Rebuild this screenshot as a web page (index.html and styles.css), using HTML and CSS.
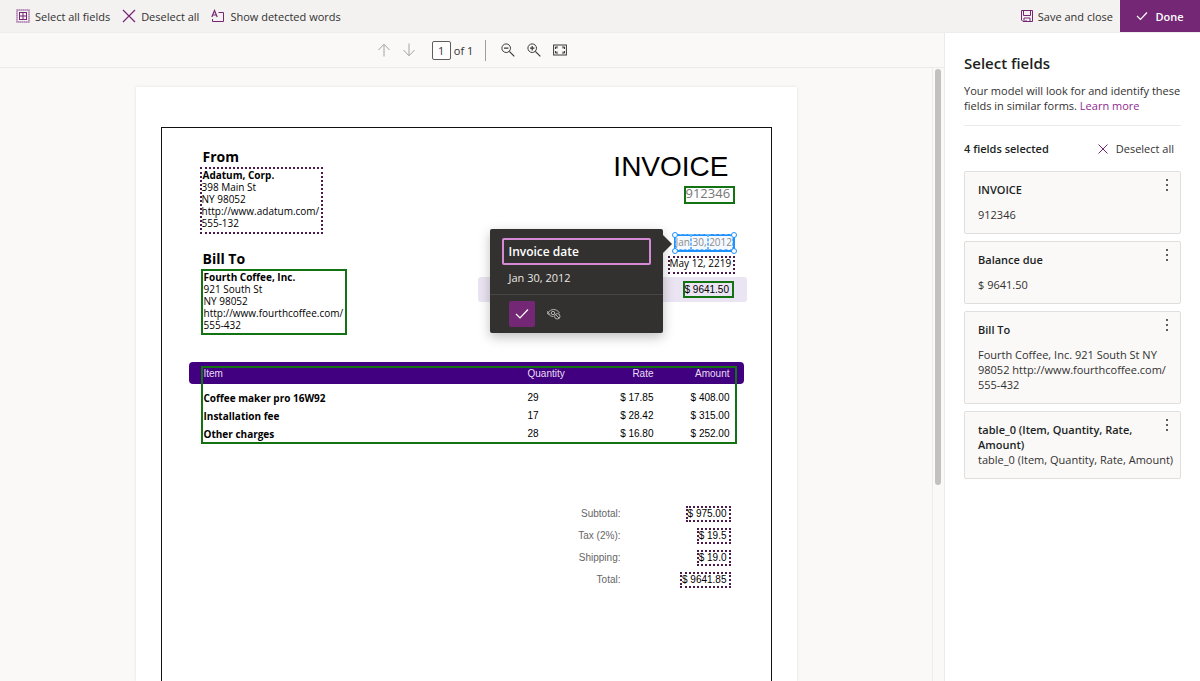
FILE: index.html
```html
<!DOCTYPE html>
<html lang="en">
<head>
  <meta charset="UTF-8">
  <title>Select fields</title>
  <meta name="viewport" content="width=device-width, initial-scale=1.0">
  <link rel="stylesheet" href="styles.css">
</head>

<body>

<header class="topbar">
  <button class="command">
    <svg width="14" height="14" viewBox="0 0 14 14" fill="none"><rect x="1" y="1" width="12" height="12" stroke="#cdb3cd" stroke-width="2"/><rect x="1" y="1" width="12" height="12" stroke="#a87ba8" stroke-dasharray="1 1"/><rect x="3.5" y="3.5" width="7" height="7" stroke="#742774"/><path d="M7 3.500v7M3.500 7h7" stroke="#742774"/></svg>
    Select all fields
  </button>
  <button class="command">
    <svg width="14" height="14" viewBox="0 0 14 14"><path d="M1 1l12 12M13 1L1 13" stroke="#742774" stroke-width="1.200"/></svg>
    Deselect all
  </button>
  <button class="command">
    <svg width="14" height="14" viewBox="0 0 14 14" fill="none" stroke="#742774"><path d="M.8 8L3.500 1.500l2.700 6.500M1.800 6h3.400" stroke-width="1.200"/><path d="M7.500 3.500h5v9h-11V10"/></svg>
    Show detected words
  </button>
  <button class="command save">
    <svg width="12" height="12" viewBox="0 0 12 12" fill="none" stroke="#742774"><path d="M.5.5h11v11H2L.5 10z"/><path d="M2.500.5v5h7v-5M3 11.500v-3.500h6v3.500M5 11.500V10"/></svg>
    Save and close
  </button>
  <button class="done">
    <svg width="12" height="10" viewBox="0 0 12 10"><path d="M1 5l3.500 3.500L11 1.500" fill="none" stroke="#fff" stroke-width="1.200"/></svg>
    Done
  </button>
</header>

<main class="workspace">

  <section class="viewer">
    <div class="pager">
      <button class="icon-button" aria-label="Previous page">
        <svg width="14" height="14" viewBox="0 0 14 14"><path d="M7 13.500V1.500M1.500 7L7 1.200 12.500 7" fill="none" stroke="#a6a4a2"/></svg>
      </button>
      <button class="icon-button next" aria-label="Next page">
        <svg width="14" height="14" viewBox="0 0 14 14"><path d="M7 .5v12M1.500 7L7 12.800 12.500 7" fill="none" stroke="#a6a4a2"/></svg>
      </button>
      <label class="page-label"><input class="page-input" type="text" value="1"> of 1</label>
      <span class="divider"></span>
      <button class="icon-button" aria-label="Zoom out">
        <svg width="14" height="14" viewBox="0 0 14 14" fill="none" stroke="#3b3a39"><circle cx="5.200" cy="5.200" r="4.300"/><path d="M8.300 8.300l5 5M3 5.200h4.400" stroke-width="1.200"/></svg>
      </button>
      <button class="icon-button zoom-in" aria-label="Zoom in">
        <svg width="14" height="14" viewBox="0 0 14 14" fill="none" stroke="#3b3a39"><circle cx="5.200" cy="5.200" r="4.300"/><path d="M8.300 8.300l5 5M3 5.200h4.400M5.200 3v4.400" stroke-width="1.200"/></svg>
      </button>
      <button class="icon-button" aria-label="Fit to page">
        <svg width="14" height="12" viewBox="0 0 14 12" fill="none" stroke="#3b3a39"><rect x=".6" y="1" width="12.800" height="10"/><path d="M2.500 5V3h2.500M9 3h2.500v2M11.500 7v2H9M5 9H2.500V7M2.500 3l1.500 1.500M11.500 3L10 4.500M11.500 9L10 7.500M2.500 9L4 7.500"/></svg>
      </button>
    </div>

    <div class="canvas">
      <div class="stage">
        <article class="sheet">
          <div class="frame">

            <div class="invoice-head">
              <div class="parties">
                <h2 class="party-title">From</h2>
                <address class="party detected"><b class="party-name">Adatum, Corp.</b><br>398 Main St<br>NY 98052<br>http://www.adatum.com/<br>555-132</address>
                <h2 class="party-title bill-title">Bill To</h2>
                <address class="party bill selected"><b class="party-name">Fourth Coffee, Inc.</b><br>921 South St<br>NY 98052<br>http://www.fourthcoffee.com/<br>555-432</address>
              </div>

              <div class="summary">
                <h1 class="invoice-title">INVOICE</h1>
                <div class="number selected">912346</div>
                <div class="date active">
                  <span class="word">Jan</span> <span class="word">30,</span> <span class="word">2012</span>
                  <i class="handle top-left"></i><i class="handle top-right"></i><i class="handle bottom-left"></i><i class="handle bottom-right"></i>

                  <div class="popover">
                    <div class="popover-body">
                      <input class="name-input" type="text" value="Invoice date" aria-label="Field name">
                      <p class="popover-value">Jan 30, 2012</p>
                    </div>
                    <div class="popover-actions">
                      <button class="confirm" aria-label="Confirm">
                        <svg width="14" height="12" viewBox="0 0 14 12"><path d="M1 6l4 4 8-8.500" fill="none" stroke="#fff" stroke-width="1.200"/></svg>
                      </button>
                      <button class="ignore" aria-label="Not in document">
                        <svg width="14" height="12" viewBox="0 0 14 12" fill="none" stroke="#b5b3b1"><path d="M.7 5.500C2.500 2.500 4.500 1.500 6.500 1.500s4.500 1 6 3.500M1.500 6c1 1.500 3 2.500 5 2.500M.8 3v3h2.500"/><circle cx="6" cy="5" r="1.700"/><circle cx="10.300" cy="8.300" r="2.700"/><path d="M8.500 6.500l3.600 3.600"/></svg>
                      </button>
                    </div>
                  </div>
                </div>
                <div class="due-date detected">May 12, 2219</div>
                <div class="balance"><span class="balance-value selected">$ 9641.50</span></div>
              </div>
            </div>

            <div class="items">
              <table class="items-table">
                <thead>
                  <tr><th class="item">Item</th><th class="qty">Quantity</th><th class="rate">Rate</th><th class="amount">Amount</th></tr>
                </thead>
                <tbody>
                  <tr><td class="item">Coffee maker pro 16W92</td><td class="qty">29</td><td class="rate">$ 17.85</td><td class="amount">$ 408.00</td></tr>
                  <tr><td class="item">Installation fee</td><td class="qty">17</td><td class="rate">$ 28.42</td><td class="amount">$ 315.00</td></tr>
                  <tr><td class="item">Other charges</td><td class="qty">28</td><td class="rate">$ 16.80</td><td class="amount">$ 252.00</td></tr>
                </tbody>
              </table>
              <div class="items-outline selected"></div>
            </div>

            <dl class="totals">
              <dt>Subtotal:</dt><dd><span class="detected">$ 975.00</span></dd>
              <dt>Tax (2%):</dt><dd><span class="detected">$ 19.5</span></dd>
              <dt>Shipping:</dt><dd><span class="detected">$ 19.0</span></dd>
              <dt>Total:</dt><dd><span class="detected">$ 9641.85</span></dd>
            </dl>

          </div>
        </article>
      </div>
      <div class="scrollbar"><div class="thumb"></div></div>
    </div>
  </section>

  <aside class="panel">
    <h2 class="panel-title">Select fields</h2>
    <p class="panel-text">Your model will look for and identify these fields in similar forms. <a href="#">Learn more</a></p>
    <div class="panel-bar">
      <span class="count">4 fields selected</span>
      <button class="deselect">
        <svg width="10" height="10" viewBox="0 0 10 10"><path d="M.5.5l9 9M9.500.5l-9 9" stroke="#742774"/></svg>
        Deselect all
      </button>
    </div>

    <div class="cards">
      <div class="card">
        <h3>INVOICE</h3>
        <p>912346</p>
        <button class="more" aria-label="More options"><svg width="2" height="12" viewBox="0 0 2 12" fill="#605e5c"><rect width="2" height="2"/><rect y="5" width="2" height="2"/><rect y="10" width="2" height="2"/></svg></button>
      </div>
      <div class="card">
        <h3>Balance due</h3>
        <p>$ 9641.50</p>
        <button class="more" aria-label="More options"><svg width="2" height="12" viewBox="0 0 2 12" fill="#605e5c"><rect width="2" height="2"/><rect y="5" width="2" height="2"/><rect y="10" width="2" height="2"/></svg></button>
      </div>
      <div class="card">
        <h3>Bill To</h3>
        <p>Fourth Coffee, Inc. 921 South St NY 98052 http://www.fourthcoffee.com/ <span class="phone">555-432</span></p>
        <button class="more" aria-label="More options"><svg width="2" height="12" viewBox="0 0 2 12" fill="#605e5c"><rect width="2" height="2"/><rect y="5" width="2" height="2"/><rect y="10" width="2" height="2"/></svg></button>
      </div>
      <div class="card table-card">
        <h3>table_0 (Item, Quantity, Rate, Amount)</h3>
        <p>table_0 (Item, Quantity, Rate, Amount)</p>
        <button class="more" aria-label="More options"><svg width="2" height="12" viewBox="0 0 2 12" fill="#605e5c"><rect width="2" height="2"/><rect y="5" width="2" height="2"/><rect y="10" width="2" height="2"/></svg></button>
      </div>
    </div>
  </aside>

</main>

</body>
</html>
```
FILE: styles.css
```css
* {
  box-sizing: border-box;
}
body {
  margin: 0;
  height: 100vh;
  display: flex;
  flex-direction: column;
  overflow: hidden;
  font-family: "Open Sans", "Noto Sans", sans-serif;
  font-size: 11px;
  line-height: 15px;
  color: #323130;
}
h1, h2, h3, p, dl, dd {
  margin: 0;
}
button, input {
  font: inherit;
  color: inherit;
  background: none;
  border: none;
  padding: 0;
}
button {
  display: flex;
  align-items: center;
  cursor: pointer;
}
svg {
  display: block;
  flex: none;
}

/* top command bar */
.topbar {
  display: flex;
  align-items: stretch;
  gap: 12px;
  height: 33px;
  flex: none;
  padding-left: 16px;
  background: #f3f2f1;
  border-bottom: 1px solid #eeedec;
}
.command {
  gap: 5px;
}
.save {
  margin-left: auto;
}
.done {
  justify-content: center;
  gap: 7px;
  width: 80px;
  margin-left: -5px;
  background: #742774;
  color: #fff;
  font-weight: 600;
}

.workspace {
  display: flex;
  flex: 1;
  min-height: 0;
}

/* document viewer */
.viewer {
  flex: 1;
  min-width: 0;
  display: flex;
  flex-direction: column;
  background: #faf9f8;
}
.pager {
  display: flex;
  align-items: center;
  justify-content: center;
  height: 35px;
  flex: none;
  border-bottom: 1px solid #edebe9;
}
.next {
  margin-left: 11px;
}
.page-label {
  display: flex;
  align-items: center;
  gap: 3px;
  margin-left: 16px;
}
.page-input {
  width: 19px;
  height: 19px;
  border: 1px solid #605e5c;
  border-radius: 2px;
  background: #fff;
  text-align: center;
}
.divider {
  width: 1px;
  height: 21px;
  margin: 0 15px 0 12px;
  background: #a19f9d;
}
.zoom-in {
  margin: 0 12px;
}
.canvas {
  display: flex;
  flex: 1;
  min-height: 0;
}
.stage {
  flex: 1;
  display: flex;
  justify-content: center;
  padding-top: 19px;
  overflow: hidden;
}
.scrollbar {
  width: 12px;
  padding: 1px 3px 0 2px;
  border-left: 1px solid #edebe9;
}
.thumb {
  height: 68%;
  border-radius: 3px;
  background: #c1c1c1;
}

/* invoice */
.sheet {
  display: flex;
  width: 100%;
  max-width: 661px;
  padding: 40px 25px 0;
  background: #fff;
  box-shadow: 0 0 3px rgba(0,0,0,0.1);
}
.frame {
  flex: 1;
  border: 1px solid #111;
  border-bottom: none;
  color: #000;
}
.invoice-head {
  display: flex;
  justify-content: space-between;
  padding: 19px 36px 0 38px;
}
.detected {
  border: 2px dotted #4b1a4b;
}
.selected {
  border: 2px solid #137313;
}
.party-title {
  padding-left: 3px;
  font-size: 14px;
  line-height: 20px;
}
.bill-title {
  margin-top: 15px;
}
.party {
  width: 123px;
  padding: 0 0 3px;
  font-size: 10px;
  font-style: normal;
  line-height: 12px;
}
.party-name {
  padding-left: 1px;
}
.bill {
  width: 146px;
  padding: 0 0 2px 1px;
  margin-left: 1px;
}
.bill .party-name {
  padding: 0;
}
.summary {
  display: flex;
  flex-direction: column;
  align-items: flex-end;
  width: 257px;
  padding-top: 3px;
  font-size: 10px;
  line-height: 14px;
}
.invoice-title {
  padding-right: 6px;
  font: 28px/34px "Liberation Sans", Arial, sans-serif;
}
.number {
  width: 51px;
  height: 18px;
  margin-top: 2px;
  font-size: 13px;
  line-height: 11px;
  color: #777;
}
.date {
  position: relative;
  width: 61px;
  height: 18px;
  margin-top: 30px;
  color: #8a8a8a;
  line-height: 12px;
  white-space: nowrap;
  background: #f3f9ff;
  border: 2px solid #1e90ff;
}
.word {
  outline: 1px dashed #6bb8ff;
}
.handle {
  position: absolute;
  width: 6px;
  height: 6px;
  border: 1px solid #1e90ff;
  border-radius: 50%;
  background: #fff;
}
.top-left { top: -4px; left: -4px; }
.top-right { top: -4px; right: -4px; }
.bottom-left { bottom: -4px; left: -4px; }
.bottom-right { bottom: -4px; right: -4px; }
.due-date {
  width: 67px;
  height: 18px;
  margin-top: 4px;
  line-height: 11px;
  white-space: nowrap;
}
.balance {
  display: flex;
  align-items: center;
  justify-content: flex-end;
  width: 269px;
  height: 25px;
  margin: 3px -12px 0 0;
  padding-right: 13px;
  background: #ebe4f2;
  border-radius: 3px;
}
.balance-value {
  width: 51px;
  height: 17px;
  font-family: "Liberation Sans", Arial, sans-serif;
  line-height: 13px;
}

/* field popover */
.popover {
  position: absolute;
  top: -7px;
  right: calc(100% + 13px);
  z-index: 2;
  width: 173px;
  background: #323130;
  border-radius: 2px;
  box-shadow: 0 4px 12px rgba(0,0,0,0.25);
  color: #fff;
  font-size: 11px;
}
.popover::after {
  content: "";
  position: absolute;
  top: 6px;
  left: 100%;
  border: 9px solid transparent;
  border-left-color: #323130;
  border-right: none;
}
.popover-body {
  padding: 9px 12px 9px;
}
.name-input {
  display: block;
  width: 100%;
  height: 27px;
  padding: 0 5px;
  border: 2px solid #d68ad6;
  border-radius: 2px;
  font-size: 12px;
  font-weight: 600;
}
.popover-value {
  padding: 5px 7px 0;
  line-height: 15px;
  color: #e8e6e4;
}
.popover-actions {
  display: flex;
  align-items: center;
  gap: 12px;
  padding: 6px 19px;
  border-top: 1px solid #484644;
}
.confirm {
  justify-content: center;
  width: 26px;
  height: 26px;
  background: #742774;
  border-radius: 2px;
}

/* line items */
.items {
  position: relative;
  margin: 27px 27px 0;
  padding-bottom: 1px;
}
.items-table {
  width: 100%;
  border-spacing: 0;
  font: 10px/18px "Liberation Sans", Arial, sans-serif;
  text-align: right;
}
.items-table th {
  height: 22px;
  padding: 2px 0 0;
  background: #40007f;
  color: #e8dcf5;
  font-weight: 400;
  text-align: inherit;
}
.items-table th:first-child {
  border-radius: 4px 0 0 4px;
}
.items-table th:last-child {
  border-radius: 0 4px 4px 0;
}
.items-table td {
  padding: 0;
}
.items-table tbody tr:first-child td {
  padding-top: 5px;
}
.items-table .item {
  padding-left: 15px;
  text-align: left;
}
.items-table td.item {
  font-family: "Open Sans", "Noto Sans", sans-serif;
  font-weight: 700;
}
.items-table .qty {
  width: 60px;
  text-align: left;
}
.items-table .rate {
  width: 66px;
}
.items-table .amount {
  width: 90px;
  padding-right: 14px;
}
.items-outline {
  position: absolute;
  top: 4px;
  right: 7px;
  bottom: 0;
  left: 12px;
}

.totals {
  display: grid;
  grid-template-columns: 1fr 110px;
  align-items: center;
  grid-auto-rows: 22px;
  margin: 59px 40px 0 0;
  font: 10px/12px "Liberation Sans", Arial, sans-serif;
  text-align: right;
}
.totals dt {
  color: #666;
}
.totals span {
  display: inline-block;
  padding-right: 2px;
}

/* right panel */
.panel {
  width: 256px;
  flex: none;
  padding: 20px 19px 0;
  border-left: 1px solid #edebe9;
}
.panel-title {
  font-size: 15px;
  font-weight: 600;
  line-height: 20px;
  color: #201f1e;
}
.panel-text {
  margin-top: 10px;
  padding-bottom: 12px;
  border-bottom: 1px solid #edebe9;
}
.panel-text a {
  color: #8f2a8f;
  text-decoration: none;
}
.panel-bar {
  display: flex;
  align-items: center;
  justify-content: space-between;
  margin: 15px 7px 15px 0;
}
.count {
  font-weight: 600;
  color: #201f1e;
}
.deselect {
  gap: 8px;
}
.cards {
  display: flex;
  flex-direction: column;
  gap: 7px;
}
.card {
  position: relative;
  padding: 10px 13px 11px;
  background: #faf9f8;
  border: 1px solid #e1dfdd;
  border-radius: 2px;
}
.card h3 {
  padding-right: 24px;
  font-size: 11px;
  font-weight: 600;
  color: #201f1e;
}
.card p {
  margin-top: 10px;
}
.phone {
  white-space: nowrap;
}
.table-card p {
  margin-top: 0;
  white-space: nowrap;
}
.more {
  position: absolute;
  top: 7px;
  right: 12px;
}
```
